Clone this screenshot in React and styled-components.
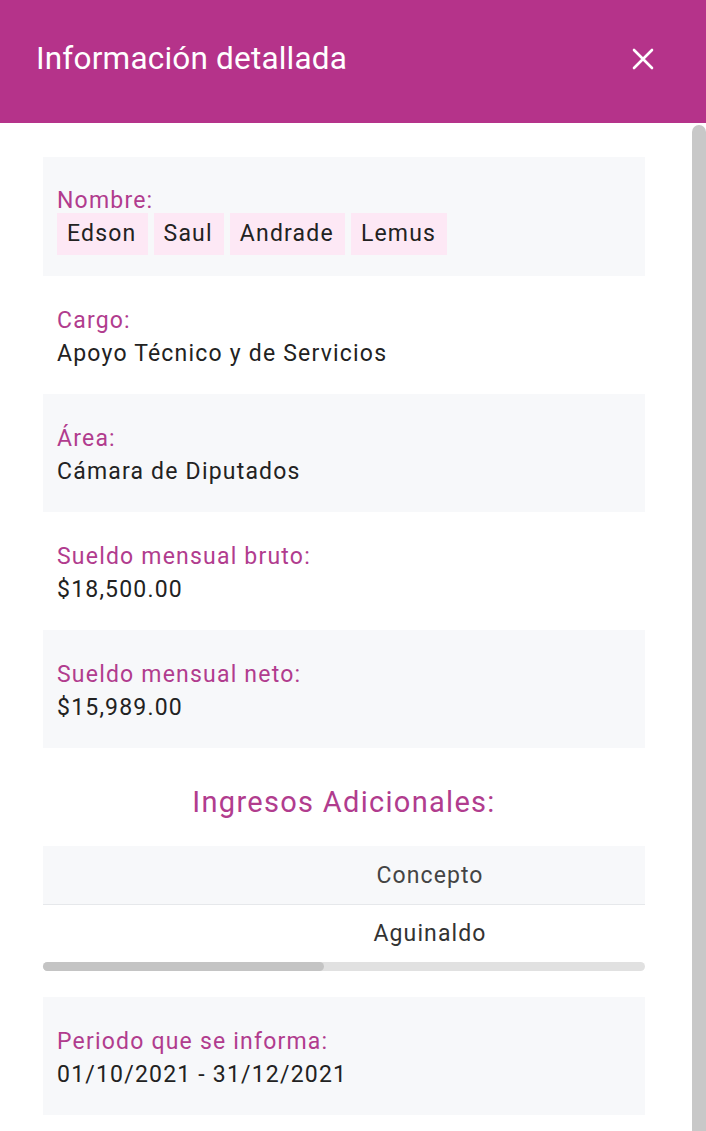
import React from 'react'
import styled, { createGlobalStyle } from 'styled-components'

const GlobalStyle = createGlobalStyle`
  html, body {
    margin: 0;
    padding: 0;
    height: 100%;
    background: #ffffff;
    font-family: Roboto, "Liberation Sans", Arial, sans-serif;
  }
  #root {
    height: 100%;
  }
`

const Modal = styled.div`
  position: relative;
  height: 100vh;
  display: flex;
  flex-direction: column;
  background: #ffffff;
  overflow: hidden;
`

const Header = styled.header`
  flex: 0 0 123px;
  background: #b5338a;
  display: flex;
  align-items: center;
  justify-content: space-between;
  padding: 0 52px 6px 36px;
  box-sizing: border-box;
`

const Title = styled.h2`
  margin: 0;
  color: #ffffff;
  font-size: 31.5px;
  font-weight: 400;
  letter-spacing: 0.2px;
`

const CloseButton = styled.button`
  border: none;
  background: transparent;
  padding: 0;
  width: 22px;
  height: 22px;
  display: flex;
  align-items: center;
  justify-content: center;
  cursor: pointer;
`

const Body = styled.div`
  flex: 1;
  overflow: hidden;
  padding: 34px 61px 60px 43px;
`

/* the page scrollbar, drawn over the right edge */
const ScrollThumb = styled.div`
  position: absolute;
  top: 125px;
  right: 0;
  bottom: 0;
  width: 14px;
  background: #c8c8c8;
  border-radius: 7px 7px 0 0;
`

const Field = styled.section`
  background: ${(props) => (props.shaded ? '#f7f8fa' : '#ffffff')};
  padding: ${(props) => (props.chips ? '32px 14px 21px' : '33px 14px 28px')};
`

const Label = styled.div`
  color: #b13c8e;
  font-size: 23px;
  line-height: 24px;
  letter-spacing: 1.2px;
`

const Value = styled.div`
  color: #222222;
  font-size: 23px;
  line-height: 24px;
  margin-top: 9px;
  letter-spacing: 1.2px;
`

const ChipRow = styled.div`
  display: flex;
  gap: 6px;
`

const Chip = styled.span`
  background: #fde8f5;
  color: #222222;
  font-size: 23px;
  line-height: 42px;
  padding: 0 11px 0 10px;
  letter-spacing: 1.2px;
`

const SectionTitle = styled.h3`
  margin: 37px 0 27px;
  text-align: center;
  color: #b13c8e;
  font-size: 29px;
  line-height: 34px;
  font-weight: 400;
  letter-spacing: 1.3px;
`

const TableWrap = styled.div`
  overflow: hidden;
`

const Table = styled.table`
  width: 1290px;
  border-collapse: collapse;
  table-layout: fixed;
`

const HeadCell = styled.th`
  background: #f7f8fa;
  color: #444444;
  font-size: 23px;
  font-weight: 400;
  height: 58px;
  padding: 0;
  text-align: center;
  letter-spacing: 1.1px;
  border-bottom: 1px solid #e6e8eb;
  width: ${(props) => props.w}px;
`

const Cell = styled.td`
  color: #333333;
  font-size: 23px;
  height: 57px;
  padding: 0;
  text-align: center;
  letter-spacing: 1.1px;
`

const HScrollTrack = styled.div`
  height: 9px;
  background: #e1e1e1;
  border-radius: 5px;
  margin-bottom: 26px;
  display: flex;
`

const HScrollThumb = styled.div`
  height: 100%;
  background: #c4c4c4;
  border-radius: 5px;
`

const CloseIcon = () => (
  <svg width="22" height="22" viewBox="0 0 22 22">
    <path d="M2 2 L20 20 M20 2 L2 20" stroke="#ffffff" strokeWidth="2.6" strokeLinecap="round" />
  </svg>
)

const fields = [
  { label: 'Cargo:', value: 'Apoyo Técnico y de Servicios', shaded: false },
  { label: 'Área:', value: 'Cámara de Diputados', shaded: true },
  { label: 'Sueldo mensual bruto:', value: '$18,500.00', shaded: false },
  { label: 'Sueldo mensual neto:', value: '$15,989.00', shaded: true },
]

const nombre = ['Edson', 'Saul', 'Andrade', 'Lemus']

const visibleWidth = 602
const tableWidth = 1290

const App = () => (
  <>
    <GlobalStyle />
    <Modal>
      <Header>
        <Title>Información detallada</Title>
        <CloseButton aria-label="Cerrar">
          <CloseIcon />
        </CloseButton>
      </Header>
      <Body>
        <Field shaded chips>
          <Label>Nombre:</Label>
          <ChipRow>
            {nombre.map((n) => (
              <Chip key={n}>{n}</Chip>
            ))}
          </ChipRow>
        </Field>
        {fields.map((f) => (
          <Field key={f.label} shaded={f.shaded}>
            <Label>{f.label}</Label>
            <Value>{f.value}</Value>
          </Field>
        ))}
        <SectionTitle>Ingresos Adicionales:</SectionTitle>
        <TableWrap>
          <Table>
            <thead>
              <tr>
                <HeadCell w={774}>Concepto</HeadCell>
                <HeadCell w={516} />
              </tr>
            </thead>
            <tbody>
              <tr>
                <Cell>Aguinaldo</Cell>
                <Cell />
              </tr>
            </tbody>
          </Table>
        </TableWrap>
        <HScrollTrack>
          <HScrollThumb style={{ width: `${(visibleWidth / tableWidth) * 100}%` }} />
        </HScrollTrack>
        <Field shaded>
          <Label>Periodo que se informa:</Label>
          <Value>01/10/2021 - 31/12/2021</Value>
        </Field>
      </Body>
      <ScrollThumb />
    </Modal>
  </>
)

export default App
